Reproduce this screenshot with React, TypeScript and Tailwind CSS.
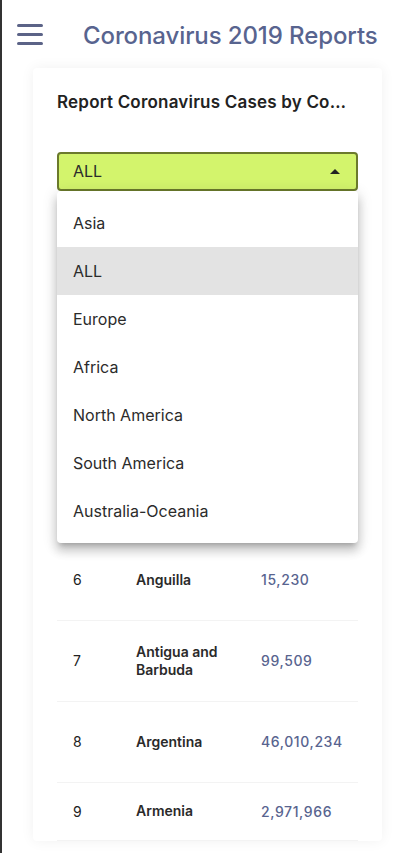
import React from 'react'

// ── Data ──────────────────────────────────────────────────────────────────────
const CONTINENTS = ['Asia', 'ALL', 'Europe', 'Africa', 'North America', 'South America', 'Australia-Oceania']

const ROWS: { n: number; name: string; pop: string; h: string }[] = [
  { n: 1, name: 'Afghanistan', pop: '40,754,388', h: 'h-[55px]' },
  { n: 2, name: 'Albania', pop: '2,866,374', h: 'h-[55px]' },
  { n: 3, name: 'Algeria', pop: '45,350,148', h: 'h-[55px]' },
  { n: 4, name: 'Andorra', pop: '77,463', h: 'h-[55px]' },
  { n: 5, name: 'Angola', pop: '35,027,343', h: 'h-[55px]' },
  { n: 6, name: 'Anguilla', pop: '15,230', h: 'h-[81px]' },
  { n: 7, name: 'Antigua and Barbuda', pop: '99,509', h: 'h-[81px]' },
  { n: 8, name: 'Argentina', pop: '46,010,234', h: 'h-[81px]' },
  { n: 9, name: 'Armenia', pop: '2,971,966', h: 'h-[58px]' },
]

const font = "font-['Inter','Noto_Sans',sans-serif]"

export default function App() {
  return (
    <div className={`relative h-[853px] overflow-hidden border-l-2 border-[#333] bg-white ${font}`}>
      {/* Header */}
      <header className="flex h-[68px] items-center pl-[15px]">
        <div className="flex w-[26px] flex-col gap-[6px]">
          <span className="h-[3px] rounded-full bg-[#5b6387]" />
          <span className="h-[3px] rounded-full bg-[#5b6387]" />
          <span className="h-[3px] rounded-full bg-[#5b6387]" />
        </div>
        <h1 className="ml-[40px] pt-[3px] text-[24px] font-medium tracking-[-0.1px] text-[#58648f]">
          Coronavirus 2019 Reports
        </h1>
      </header>

      {/* Card */}
      <div className="relative mx-[31px] rounded-[4px] bg-white px-[24px] pt-[22px] shadow-[0_0_14px_rgba(0,0,0,0.06)]">
        <h2 className="truncate pr-[2px] text-[17px] font-semibold tracking-[0.2px] text-[#222]">
          Report Coronavirus Cases by Continent
        </h2>

        {/* Select */}
        <div className="mt-[36px] flex h-[39px] items-center justify-between rounded-[4px] border-2 border-[#6b7a2c] bg-[#d3f46c] pl-[14px] pr-[16px]">
          <span className="text-[16px] text-[#2b2b2b]">ALL</span>
          <span className="h-0 w-0 border-x-[5px] border-b-[5px] border-x-transparent border-b-[#222]" />
        </div>

        {/* Table */}
        <div className="mt-[18px]">
          <div className="flex h-[56px] items-center border-b border-[#f1f1f1] text-[14px] font-semibold text-[#222]">
            <span className="w-[79px] pl-[16px]">#</span>
            <span className="w-[125px]">Country</span>
            <span>Population</span>
          </div>
          {ROWS.map((r) => (
            <div key={r.n} className={`flex items-center border-b border-[#f3f3f3] ${r.h}`}>
              <span className="w-[79px] pl-[16px] text-[14px] text-[#222]">{r.n}</span>
              <span className="w-[125px] pr-[10px] text-[14px] font-semibold leading-[18px] text-[#2a2a2a]">{r.name}</span>
              <span className="text-[14px] font-medium tracking-[0.6px] text-[#58648f]">{r.pop}</span>
            </div>
          ))}
        </div>

        {/* Dropdown menu */}
        <ul className="absolute left-[24px] right-[24px] top-[123px] rounded-[4px] bg-white py-[8px] shadow-[0_5px_5px_-3px_rgba(0,0,0,0.2),0_8px_10px_1px_rgba(0,0,0,0.14),0_3px_14px_2px_rgba(0,0,0,0.12)]">
          {CONTINENTS.map((c) => (
            <li
              key={c}
              className={`flex h-[48px] items-center px-[16px] text-[16px] text-[#2b2b2b] ${c === 'ALL' ? 'bg-[#e3e3e3]' : ''}`}
            >
              {c}
            </li>
          ))}
        </ul>
      </div>
    </div>
  )
}
